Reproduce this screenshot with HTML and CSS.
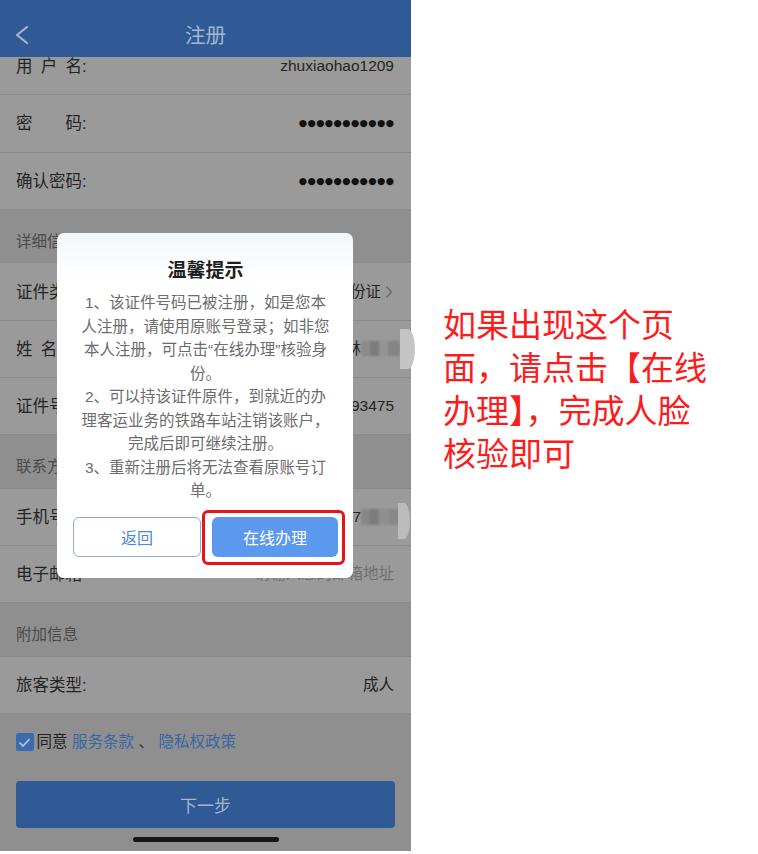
FILE: index.html
```html
<!DOCTYPE html>
<html lang="zh-CN">
<head>
<meta charset="utf-8">
<title>注册</title>
<link rel="stylesheet" href="styles.css">
</head>
<body>
<div class="screen">
  <div class="phone">
    <header class="nav">
      <svg class="nav-back" width="16" height="20" viewBox="0 0 16 20"><path d="M13 2 L3 10 L13 18" fill="none" stroke="#a4b6cf" stroke-width="2.2" stroke-linecap="round" stroke-linejoin="round"/></svg>
      <div class="nav-title">注册</div>
    </header>
    <div class="content">
      <div class="list">
        <div class="row"><span class="label">用&ensp;户&ensp;名:</span><span class="value">zhuxiaohao1209</span></div>
        <div class="row"><span class="label">密&emsp;&emsp;码:</span><span class="value dots">●●●●●●●●●●●</span></div>
        <div class="row"><span class="label">确认密码:</span><span class="value dots">●●●●●●●●●●●</span></div>
        <div class="section">详细信息</div>
        <div class="row"><span class="label">证件类型</span><span class="value">中国居民身份证<svg class="chev" width="8" height="14" viewBox="0 0 8 14"><path d="M1.5 1.5 L6.5 7 L1.5 12.5" fill="none" stroke="#666" stroke-width="1.3"/></svg></span></div>
        <div class="row"><span class="label">姓&ensp;名</span><span class="value">林<span class="mosaic mosaic-name"></span></span></div>
        <div class="row"><span class="label">证件号码</span><span class="value">3501*********93475</span></div>
        <div class="section">联系方式</div>
        <div class="row"><span class="label">手机号码</span><span class="value">1867<span class="mosaic mosaic-phone"></span></span></div>
        <div class="row"><span class="label">电子邮箱</span><span class="value placeholder">请输入您的邮箱地址</span></div>
        <div class="section">附加信息</div>
        <div class="row"><span class="label">旅客类型:</span><span class="value">成人</span></div>
      </div>
      <div class="agree">
        <span class="check"><svg width="13" height="11" viewBox="0 0 13 11"><path d="M1.5 5.5 L5 9 L11.5 2" fill="none" stroke="#b9c8dc" stroke-width="1.6"/></svg></span>
        <span class="agree-text">同意</span>
        <span class="link">服务条款</span>
        <span class="sep">、</span>
        <span class="link">隐私权政策</span>
      </div>
      <div class="next">下一步</div>
      <div class="home-bar"></div>
    </div>
    <span class="smudge smudge-name"></span>
    <span class="smudge smudge-phone"></span>

    <div class="modal">
      <div class="modal-title">温馨提示</div>
      <p class="modal-text">1、该证件号码已被注册，如是您本<br>人注册，请使用原账号登录；如非您<br>本人注册，可点击“在线办理”核验身<br>份。<br>2、可以持该证件原件，到就近的办<br>理客运业务的铁路车站注销该账户，<br>完成后即可继续注册。<br>3、重新注册后将无法查看原账号订<br>单。</p>
      <div class="modal-actions">
        <div class="btn btn-back">返回</div>
        <div class="btn-wrap">
          <div class="btn btn-ok">在线办理</div>
          <span class="highlight"></span>
        </div>
      </div>
    </div>
  </div>
  <div class="note">如果出现这个页<br>面，请点击【在线<br>办理】，完成人脸<br>核验即可</div>
</div>
</body>
</html>
```

FILE: styles.css
```css
* { box-sizing: border-box; }
html, body { margin: 0; padding: 0; background: #ffffff; }
body {
  font-family: "Liberation Sans", "Noto Sans CJK SC", sans-serif;
  color: #262626;
}
.screen {
  display: flex;
  width: 758px;
  height: 854px;
}
.phone {
  position: relative;
  width: 411px;
  height: 851px;
  background: #8f8f8f;
  display: flex;
  flex-direction: column;
  flex-shrink: 0;
}
.nav {
  position: relative;
  z-index: 2;
  height: 57px;
  padding-top: 11px;
  background: #2f5a96;
  display: flex;
  align-items: center;
  justify-content: center;
  flex-shrink: 0;
}
.nav-back {
  position: absolute;
  left: 14px;
  top: 25px;
}
.nav-title {
  font-family: "Noto Sans CJK SC", sans-serif;
  font-size: 20.5px;
  line-height: 28px;
  color: #a4b6cf;
  height: 46px;
  display: flex;
  align-items: center;
}
.content {
  flex: 1;
  display: flex;
  flex-direction: column;
}
.list {
  margin-top: -19px;
}
.row {
  height: 57.3px;
  background: #9a9a9a;
  border-bottom: 1px solid #8b8b8b;
  padding: 0 17px 0 16px;
  display: flex;
  align-items: center;
  justify-content: space-between;
}
.label {
  font-size: 16.5px;
  line-height: 22px;
  color: #242424;
  white-space: nowrap;
}
.value {
  font-size: 15.5px;
  line-height: 22px;
  color: #242424;
  display: flex;
  align-items: center;
  white-space: nowrap;
}
.dots {
  font-family: "DejaVu Sans", sans-serif;
  font-size: 9.5px;
  letter-spacing: 0.4px;
  margin-right: -0.4px;
  color: #111;
}
.chev {
  margin-left: 4px;
  margin-right: 1px;
}
.placeholder {
  color: #6f6f6f;
}
.mosaic {
  display: inline-block;
  width: 39px;
  height: 15px;
  margin-right: -6px;
  background: linear-gradient(90deg, #8c8c8c 0 22%, #7c7c7c 22% 46%, #949494 46% 70%, #858585 70% 100%);
  filter: blur(1.2px);
}
.mosaic-phone {
  height: 16px;
  background: linear-gradient(90deg, #888 0 20%, #7d7d7d 20% 45%, #8f8f8f 45% 72%, #888 72% 100%);
}
.smudge {
  position: absolute;
  background: #c4c4c4;
  border-radius: 0 50% 50% 0;
  filter: blur(0.6px);
}
.smudge-name {
  left: 400px;
  top: 329px;
  width: 15px;
  height: 40px;
}
.smudge-phone {
  left: 398px;
  top: 503px;
  width: 12px;
  height: 36px;
  background: #bcbcbc;
}
.section {
  height: 53.5px;
  padding: 22px 16px 0;
  font-size: 15.5px;
  line-height: 20px;
  color: #4a4a4a;
  border-bottom: 1px solid #8b8b8b;
}
.agree {
  margin-top: 18px;
  padding-left: 16px;
  display: flex;
  align-items: center;
  height: 20px;
  font-size: 15.5px;
  line-height: 20px;
  white-space: pre;
}
.check {
  width: 17.5px;
  height: 17.5px;
  background: #3b6cb0;
  border-radius: 2px;
  display: flex;
  align-items: center;
  justify-content: center;
  margin-right: 3px;
}
.agree-text { color: #1f1f1f; }
.link { color: #3866a6; margin-left: 4.5px; }
.sep { color: #3a3a3a; margin-left: 4.5px; }
.next {
  margin: 29px 16px 0;
  height: 47px;
  border-radius: 4px;
  background: #2f5a96;
  color: #a6b6cd;
  font-size: 17px;
  display: flex;
  align-items: center;
  justify-content: center;
}
.home-bar {
  margin: 9px auto 0;
  width: 146px;
  height: 5px;
  border-radius: 3px;
  background: #161616;
}
.modal {
  position: absolute;
  z-index: 3;
  left: 57px;
  top: 233px;
  width: 296px;
  padding: 23px 15px 21px 16px;
  border-radius: 7px;
  background: linear-gradient(#f3f6fa, #ffffff 45px);
}
.modal-title {
  font-family: "Noto Sans CJK SC", sans-serif;
  font-weight: 700;
  font-size: 19px;
  line-height: 26px;
  color: #1e1e1e;
  text-align: center;
}
.modal-text {
  margin: 9px 0 0;
  font-size: 15.5px;
  line-height: 23.5px;
  color: #6c6c6c;
  text-align: center;
  white-space: nowrap;
}
.modal-actions {
  margin-top: 14px;
  display: flex;
  gap: 11px;
}
.btn {
  height: 40px;
  border-radius: 6px;
  font-size: 16px;
  display: flex;
  align-items: center;
  justify-content: center;
}
.btn-back {
  flex: 1;
  border: 1px solid #88acdb;
  color: #4c88d2;
  background: #ffffff;
}
.btn-wrap {
  flex: 1;
  position: relative;
}
.btn-ok {
  background: #5a99ee;
  color: #ffffff;
}
.highlight {
  position: absolute;
  left: -10px;
  right: -7px;
  top: -7px;
  bottom: -8px;
  border: 3px solid #e5141b;
  border-radius: 6px;
}
.note {
  margin-left: 32px;
  padding-top: 302px;
  font-family: "Noto Sans CJK SC", sans-serif;
  font-size: 33px;
  line-height: 43px;
  color: #fb1d1d;
  white-space: nowrap;
}
```
